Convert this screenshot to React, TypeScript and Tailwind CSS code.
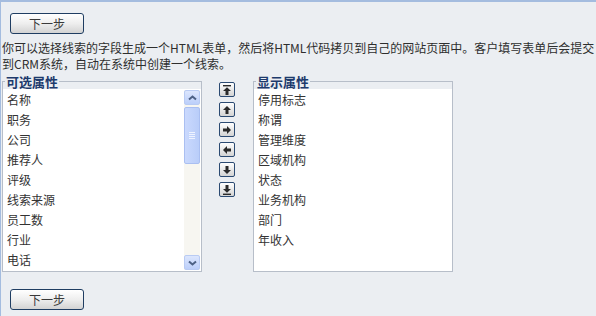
import React from "react";

const leftItems = ["名称", "职务", "公司", "推荐人", "评级", "线索来源", "员工数", "行业", "电话"];
const rightItems = ["停用标志", "称谓", "管理维度", "区域机构", "状态", "业务机构", "部门", "年收入"];

const font = { fontFamily: '"Noto Sans CJK SC", "Liberation Sans", sans-serif' };

function StepButton() {
  return (
    <button className="ml-[9px] flex h-[21px] w-[74px] items-center justify-center rounded-[3px] border border-[#1f3d62] bg-gradient-to-b from-[#ffffff] via-[#eeeeee] to-[#d3d3d3] text-[12px] leading-none text-[#3a3a3a]">
      下一步
    </button>
  );
}

type ArrowKind = "top" | "up" | "right" | "left" | "down" | "bottom";

function ArrowIcon({ kind }: { kind: ArrowKind }) {
  const paths: Record<ArrowKind, React.ReactNode> = {
    top: (
      <>
        <rect x="1" y="0" width="8" height="1.4" />
        <path d="M5 2.2 L9 6 H6.5 V10 H3.5 V6 H1 Z" />
      </>
    ),
    up: <path d="M5 1 L9 5 H6.5 V9 H3.5 V5 H1 Z" />,
    right: <path d="M9 5 L5 1 V3.5 H1 V6.5 H5 V9 Z" />,
    left: <path d="M1 5 L5 1 V3.5 H9 V6.5 H5 V9 Z" />,
    down: <path d="M5 9 L9 5 H6.5 V1 H3.5 V5 H1 Z" />,
    bottom: (
      <>
        <rect x="1" y="8.6" width="8" height="1.4" />
        <path d="M5 7.8 L9 4 H6.5 V0 H3.5 V4 H1 Z" />
      </>
    ),
  };
  return (
    <svg width="10" height="10" viewBox="0 0 10 10" fill="#2a2a2a">
      {paths[kind]}
    </svg>
  );
}

function MoveButton({ kind }: { kind: ArrowKind }) {
  return (
    <button className="flex h-[15px] w-[16px] items-center justify-center rounded-[2px] border border-[#2b4a72] bg-gradient-to-b from-[#ffffff] to-[#d4d4d4]">
      <ArrowIcon kind={kind} />
    </button>
  );
}

function Chevron({ down }: { down?: boolean }) {
  return (
    <svg width="9" height="6" viewBox="0 0 9 6">
      <path
        d={down ? "M1 1.5 L4.5 4.5 L8 1.5" : "M1 4.5 L4.5 1.5 L8 4.5"}
        fill="none"
        stroke="#4d6185"
        strokeWidth="2"
      />
    </svg>
  );
}

function ScrollBar() {
  return (
    <div className="my-[1px] mr-[1px] flex w-[16px] flex-col bg-[#f7f6f1]">
      <div className="flex h-[15px] items-center justify-center rounded-[2px] border border-[#b9cbf3] bg-gradient-to-b from-[#dce6fd] to-[#bccffa]">
        <Chevron />
      </div>
      <div className="mt-[2px] flex h-[57px] flex-col items-center justify-center gap-[1px] rounded-[2px] border border-[#aabff1] bg-gradient-to-r from-[#cad9fd] to-[#b9cdf9]">
        <div className="h-[1px] w-[6px] bg-[#eef3ff]" />
        <div className="h-[1px] w-[6px] bg-[#eef3ff]" />
        <div className="h-[1px] w-[6px] bg-[#eef3ff]" />
        <div className="h-[1px] w-[6px] bg-[#eef3ff]" />
      </div>
      <div className="flex-1" />
      <div className="flex h-[15px] items-center justify-center rounded-[2px] border border-[#b9cbf3] bg-gradient-to-b from-[#dce6fd] to-[#bccffa]">
        <Chevron down />
      </div>
    </div>
  );
}

function FieldList({ title, items, scroll }: { title: string; items: string[]; scroll?: boolean }) {
  return (
    <fieldset className="w-[200px] border border-[#b7bec9]">
      <legend className="ml-[2px] px-[1px] text-[13px] font-bold leading-[15px] text-[#1d3a6c]">{title}</legend>
      <div className="flex h-[182px] bg-white">
        <ul className="flex-1 pl-[4px] pt-[1px] text-[12px] text-[#333]">
          {items.map((item) => (
            <li key={item} className="h-[20px] leading-[20px]">
              {item}
            </li>
          ))}
        </ul>
        {scroll && <ScrollBar />}
      </div>
    </fieldset>
  );
}

export default function App() {
  return (
    <div
      className="h-[316px] w-[596px] overflow-hidden border-l border-t-2 border-[#a4bcdf] bg-[#ebeef2]"
      style={font}
    >
      <div className="mt-[11px]">
        <StepButton />
      </div>
      <p className="mt-[6px] pl-[1px] text-[12px] leading-[16px] text-[#2e2e2e]">
        你可以选择线索的字段生成一个HTML表单，然后将HTML代码拷贝到自己的网站页面中。客户填写表单后会提交
        <br />
        到CRM系统，自动在系统中创建一个线索。
      </p>
      <div className="mt-[2px] flex pl-[1px]">
        <FieldList title="可选属性" items={leftItems} scroll />
        <div className="ml-[17px] mr-[18px] flex flex-col gap-[5px] pt-[8px]">
          <MoveButton kind="top" />
          <MoveButton kind="up" />
          <MoveButton kind="right" />
          <MoveButton kind="left" />
          <MoveButton kind="down" />
          <MoveButton kind="bottom" />
        </div>
        <FieldList title="显示属性" items={rightItems} />
      </div>
      <div className="mt-[17px]">
        <StepButton />
      </div>
    </div>
  );
}
